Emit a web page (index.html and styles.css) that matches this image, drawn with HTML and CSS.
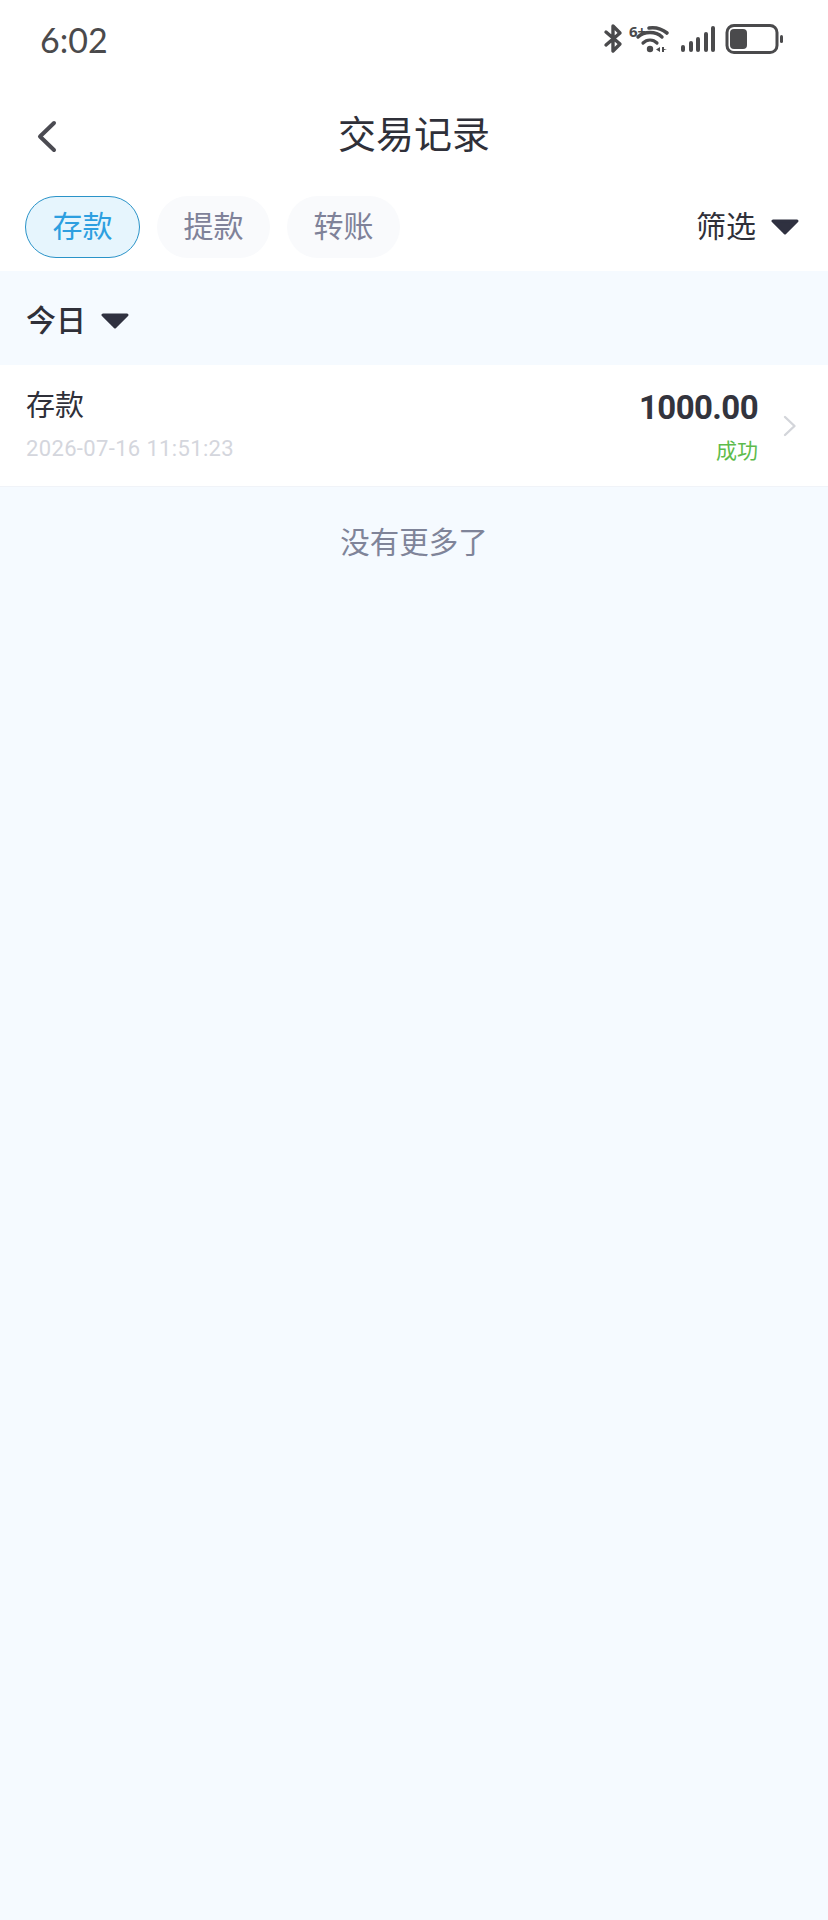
FILE: index.html
```html
<!DOCTYPE html>
<html lang="zh-CN">
<head>
    <meta charset="UTF-8">
    <meta name="viewport" content="width=device-width, initial-scale=1.0">
    <title>交易记录</title>
    <link rel="stylesheet" href="styles.css">
</head>
<body>
    <div class="status-bar">
        <span class="time">6:02</span>
        <svg class="status-icons" width="184" height="42" viewBox="0 -4 184 42" fill="none">
            <!-- bluetooth -->
            <path d="M6 9 L20 21 L13 28 L13 3 L20 10 L6 22" stroke="#4a4a4c" stroke-width="3.4" stroke-linejoin="round" stroke-linecap="round"/>
            <!-- wifi -->
            <text x="29" y="14" class="wifi-label">6+</text>
            <path d="M49 5 C56 4 62 6 67 10" stroke="#4a4a4c" stroke-width="3.6" stroke-linecap="round"/>
            <path d="M38 14 C44 8 56 8 62 14" stroke="#4a4a4c" stroke-width="3.4" stroke-linecap="round"/>
            <path d="M43 20 C47 16 53 16 57 20" stroke="#4a4a4c" stroke-width="3.2" stroke-linecap="round"/>
            <circle cx="50" cy="26" r="3.2" fill="#4a4a4c"/>
            <path d="M60 24 L56 26.5 L60 29 Z M62 24 L62 29 L64 29 L64 27 L67 26.5 L64 26 L64 24 Z" fill="#4a4a4c"/>
            <!-- signal -->
            <rect x="81" y="22" width="4" height="7" rx="2" fill="#4a4a4c"/>
            <rect x="89" y="18" width="4" height="11" rx="2" fill="#4a4a4c"/>
            <rect x="96" y="14" width="4" height="15" rx="2" fill="#4a4a4c"/>
            <rect x="104" y="9" width="4" height="20" rx="2" fill="#4a4a4c"/>
            <rect x="111" y="3" width="4" height="26" rx="2" fill="#4a4a4c"/>
            <!-- battery -->
            <rect x="127" y="2.5" width="50" height="27" rx="7" stroke="#4a4a4c" stroke-width="3"/>
            <rect x="130" y="6" width="17" height="20" rx="4" fill="#4a4a4c"/>
            <rect x="180" y="12" width="3" height="8" rx="1.5" fill="#4a4a4c"/>
        </svg>
    </div>

    <header class="nav-bar">
        <svg class="back" width="24" height="34" viewBox="0 0 24 34" fill="none">
            <path d="M19 3 L5 16.5 L19 30" stroke="#4b4b52" stroke-width="4" stroke-linecap="round" stroke-linejoin="round"/>
        </svg>
        <h1 class="title">交易记录</h1>
    </header>

    <div class="tab-bar">
        <a class="tab tab-active">存款</a>
        <a class="tab">提款</a>
        <a class="tab">转账</a>
        <div class="filter">
            <span class="filter-label">筛选</span>
            <svg class="caret" width="28" height="16" viewBox="0 0 28 16">
                <path d="M2 2 L26 2 L14 14 Z" fill="#2f3140" stroke="#2f3140" stroke-width="3" stroke-linejoin="round"/>
            </svg>
        </div>
    </div>

    <main class="content">
        <div class="day-head">
            <span>今日</span>
            <svg class="caret day-caret" width="28" height="16" viewBox="0 0 28 16">
                <path d="M2 2 L26 2 L14 14 Z" fill="#2f3140" stroke="#2f3140" stroke-width="3" stroke-linejoin="round"/>
            </svg>
        </div>

        <div class="record">
            <div class="record-left">
                <div class="record-name">存款</div>
                <div class="record-date">2026-07-16 11:51:23</div>
            </div>
            <div class="record-right">
                <div class="record-amount">1000.00</div>
                <div class="record-state">成功</div>
            </div>
            <svg class="chevron" width="14" height="22" viewBox="0 0 14 22" fill="none">
                <path d="M2 2 L11.5 11 L2 20" stroke="#d3d5da" stroke-width="2.4" stroke-linecap="round" stroke-linejoin="round"/>
            </svg>
        </div>

        <div class="no-more">没有更多了</div>
    </main>
</body>
</html>
```

FILE: styles.css
```css
* {
    box-sizing: border-box;
}
body {
    margin: 0;
    width: 828px;
    height: 1920px;
    overflow: hidden;
    display: flex;
    flex-direction: column;
    background-color: #ffffff;
    font-family: "Noto Sans CJK SC", "Noto Sans", sans-serif;
    color: #2f3039;
}
.status-bar {
    height: 80px;
    flex-shrink: 0;
    display: flex;
    align-items: center;
    justify-content: space-between;
    padding: 0 44px 0 40px;
}
.time {
    margin-bottom: 2px;
    font-family: Lato, "Open Sans", sans-serif;
    font-size: 34px;
    color: #4a4a4c;
}
.wifi-label {
    font-family: "Open Sans", sans-serif;
    font-size: 15px;
    font-weight: 700;
    fill: #4a4a4c;
}
.nav-bar {
    height: 110px;
    flex-shrink: 0;
    display: flex;
    align-items: center;
    justify-content: center;
    padding-bottom: 7px;
    position: relative;
}
.back {
    position: absolute;
    left: 35px;
    top: 40px;
}
.title {
    margin: 0;
    font-size: 38px;
    font-weight: 400;
}
.tab-bar {
    height: 81px;
    flex-shrink: 0;
    display: flex;
    align-items: flex-start;
    gap: 17px;
    padding: 6px 29px 0 25px;
}
.tab {
    width: 113px;
    height: 62px;
    border-radius: 31px;
    background-color: #f9fafc;
    color: #7f8299;
    font-size: 30px;
    line-height: 57px;
    text-align: center;
}
.tab-active {
    width: 115px;
    border: 1.5px solid #2a93c8;
    background-color: #e6f5fd;
    color: #2d9fe0;
    line-height: 54px;
}
.filter {
    margin-left: auto;
    height: 62px;
    display: flex;
    align-items: center;
    gap: 15px;
    font-size: 30px;
}
.filter-label {
    margin-bottom: 6px;
}
.content {
    flex: 1;
    background-color: #f5faff;
}
.day-head {
    height: 94px;
    display: flex;
    align-items: center;
    gap: 15px;
    padding-left: 26px;
    font-size: 30px;
    font-weight: 500;
}
.day-caret {
    margin-top: 5px;
}
.record {
    height: 122px;
    display: flex;
    align-items: center;
    padding: 0 31px 0 26px;
    background-color: #ffffff;
    border-bottom: 1px solid #f0f3f8;
}
.record-left {
    flex: 1;
}
.record-name {
    margin-top: -6px;
    font-size: 29px;
    line-height: 40px;
}
.record-date {
    margin-top: 12px;
    font-family: Roboto, sans-serif;
    font-size: 22px;
    letter-spacing: 0.35px;
    line-height: 28px;
    color: #d4d6dd;
}
.record-right {
    text-align: right;
}
.record-amount {
    font-family: Roboto, sans-serif;
    font-weight: 700;
    font-size: 33px;
    letter-spacing: -0.6px;
    line-height: 40px;
    color: #33343d;
}
.record-state {
    margin-top: 7px;
    font-size: 21px;
    line-height: 28px;
    color: #5dbb4b;
}
.chevron {
    margin-left: 25px;
}
.no-more {
    margin-top: 32px;
    font-size: 29.5px;
    line-height: 42px;
    text-align: center;
    color: #7f8499;
}
```
